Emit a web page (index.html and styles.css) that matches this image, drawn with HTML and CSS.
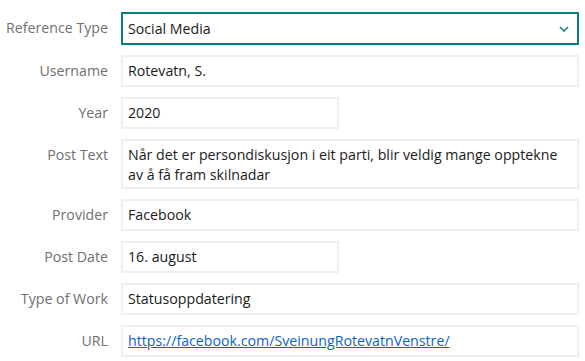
FILE: index.html
```html
<!DOCTYPE html>
<html lang="en">
<head>
  <meta charset="UTF-8" />
  <title>Reference</title>
  <link rel="stylesheet" href="styles.css">
</head>
<body>
  <form class="ref-form">
    <div class="row">
      <label class="label">Reference Type</label>
      <div class="field select">
        <span>Social Media</span>
        <svg class="chevron" width="10" height="6" viewBox="0 0 10 6"><path d="M1 1 L5 5 L9 1" fill="none" stroke="#1a8a86" stroke-width="1.7"/></svg>
      </div>
    </div>
    <div class="row">
      <label class="label">Username</label>
      <div class="field">Rotevatn, S.</div>
    </div>
    <div class="row">
      <label class="label">Year</label>
      <div class="field short">2020</div>
    </div>
    <div class="row">
      <label class="label">Post Text</label>
      <div class="field multi">Når det er persondiskusjon i eit parti, blir veldig mange opptekne av å få fram skilnadar</div>
    </div>
    <div class="row">
      <label class="label">Provider</label>
      <div class="field">Facebook</div>
    </div>
    <div class="row">
      <label class="label">Post Date</label>
      <div class="field short">16. august</div>
    </div>
    <div class="row">
      <label class="label">Type of Work</label>
      <div class="field">Statusoppdatering</div>
    </div>
    <div class="row">
      <label class="label">URL</label>
      <div class="field"><a href="#">https://facebook.com/SveinungRotevatnVenstre/</a></div>
    </div>
  </form>
</body>
</html>
```

FILE: styles.css
```css
:root {
  --label-color: #707070;
  --text-color: #1b1b1b;
  --border: #efefef;
  --accent: #0b7f7a;
  --link: #0a64c8;
}

* { box-sizing: border-box; }

body {
  margin: 0;
  background: #fff;
  font-family: 'Open Sans', sans-serif;
  font-size: 14.2px;
  color: var(--text-color);
}

.ref-form {
  padding: 12px 6px 0 0;
  display: flex;
  flex-direction: column;
  gap: 10px;
}

.row {
  display: grid;
  grid-template-columns: 108px 1fr;
  column-gap: 13px;
  align-items: start;
}

.label {
  text-align: right;
  color: var(--label-color);
  line-height: 20px;
  padding-top: 6px;
  white-space: nowrap;
}

.field {
  border: 2px solid var(--border);
  height: 32px;
  padding: 4px 5px;
  line-height: 20px;
  white-space: nowrap;
}

.field.short { width: 218px; }

.field.multi {
  height: 50px;
  padding-right: 10px;
  white-space: normal;
}

.field.select {
  border-color: var(--accent);
  height: 33px;
  display: flex;
  justify-content: space-between;
  align-items: center;
  padding-right: 8px;
}

.field a {
  color: var(--link);
  text-decoration: underline;
}
```
